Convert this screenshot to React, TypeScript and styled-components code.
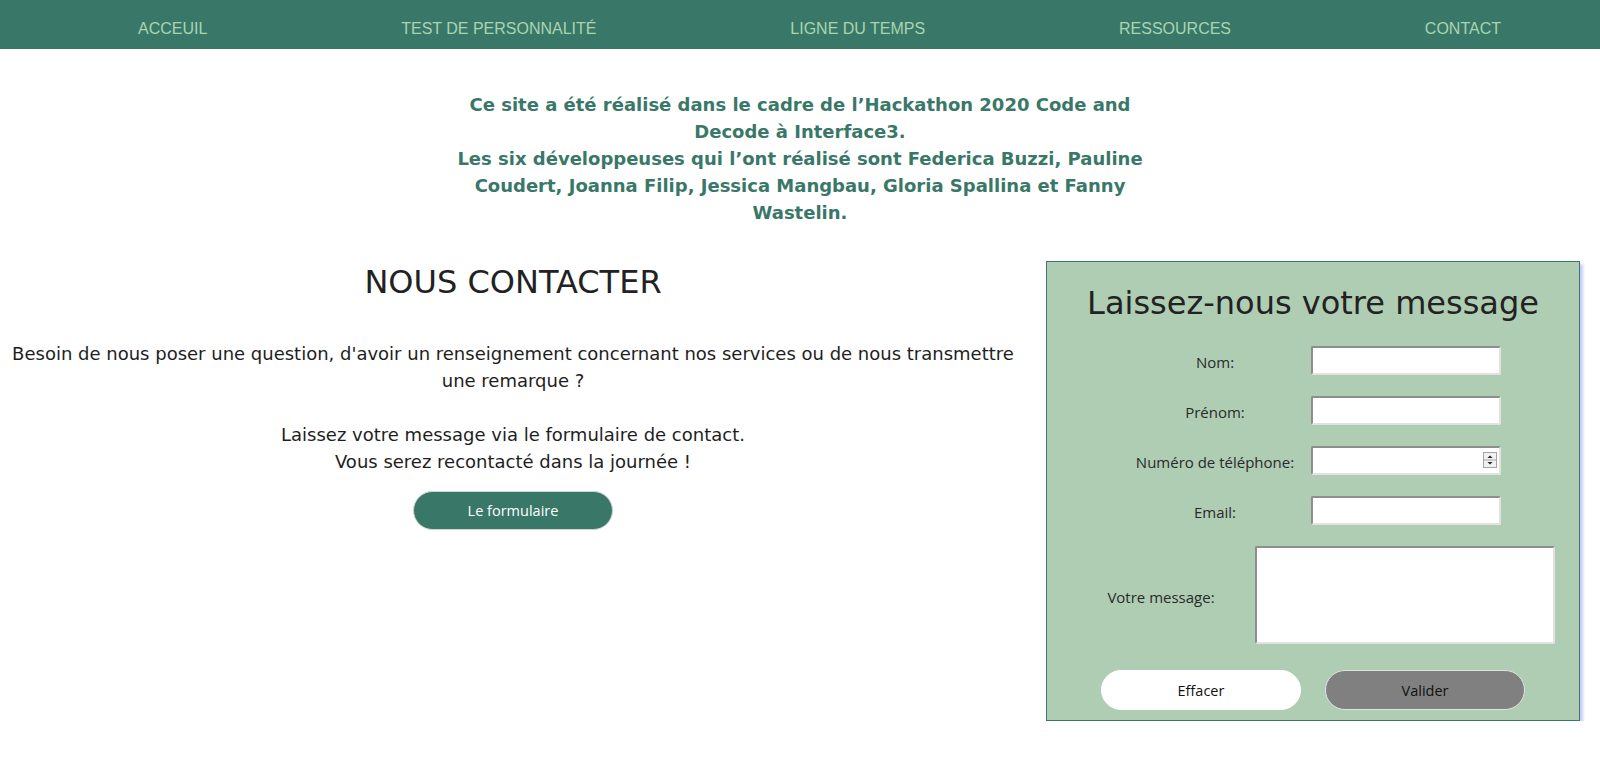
import React from "react";
import styled, { createGlobalStyle } from "styled-components";

const GlobalStyle = createGlobalStyle`
  html, body {
    margin: 0;
    padding: 0;
    background: #ffffff;
  }
  body {
    font-family: "DejaVu Sans", Verdana, sans-serif;
    color: #222222;
  }
  * { box-sizing: border-box; }
`;

const Nav = styled.nav`
  display: flex;
  justify-content: space-between;
  align-items: flex-start;
  height: 49px;
  padding: 20px 99px 0 138px;
  background: #397868;
`;

const NavLink = styled.a`
  font-family: "Liberation Sans", Arial, sans-serif;
  font-size: 16px;
  line-height: 18px;
  color: #a9d4b1;
  text-decoration: none;
  white-space: nowrap;
`;

const Intro = styled.p`
  width: 715px;
  margin: 42px auto 0;
  text-align: center;
  font-weight: bold;
  font-size: 18px;
  line-height: 27px;
  color: #397868;
`;

const Main = styled.main`
  display: flex;
  align-items: flex-start;
  gap: 20px;
  margin-top: 35px;
  padding-right: 20px;
`;

const ContactInfo = styled.section`
  flex: 1;
  display: flex;
  flex-direction: column;
  align-items: center;
  padding: 0 10px;
  text-align: center;
`;

const Heading = styled.h1`
  margin: 0;
  font-size: 32px;
  line-height: 42px;
  font-weight: normal;
  color: #222222;
`;

const Text = styled.p`
  margin: 37px 0 0;
  font-size: 18px;
  line-height: 27px;
  color: #1e1e1e;
`;

const PillButton = styled.button<{ $variant: "primary" | "light" | "grey" }>`
  width: 200px;
  height: ${(p) => (p.$variant === "primary" ? "39px" : "40px")};
  border-radius: 20px;
  font-family: "Open Sans", "Noto Sans", sans-serif;
  font-size: 14.5px;
  cursor: pointer;
  background: ${(p) =>
    p.$variant === "primary" ? "#397868" : p.$variant === "light" ? "#ffffff" : "#808080"};
  color: ${(p) => (p.$variant === "primary" ? "#ffffff" : "#111111")};
  border: 1px solid
    ${(p) => (p.$variant === "primary" ? "#d4d4d4" : p.$variant === "light" ? "#ffffff" : "#e2e2e2")};
`;

const FormButton = styled(PillButton)`
  margin-top: 16px;
`;

const FormPanel = styled.form`
  width: 534px;
  flex: none;
  padding: 21px 0 10px;
  background: #aecdb3;
  border: 1px solid #397868;
  box-shadow: 3px 3px 3px #c6caff;
  display: flex;
  flex-direction: column;
`;

const PanelTitle = styled.h2`
  margin: 0;
  font-size: 32px;
  line-height: 40px;
  font-weight: normal;
  text-align: center;
  color: #222222;
`;

const Fields = styled.div`
  display: grid;
  grid-template-columns: 180px 190px;
  column-gap: 6px;
  row-gap: 21px;
  align-items: center;
  margin: 23px 0 0 78px;
`;

const MessageRow = styled.div`
  display: grid;
  grid-template-columns: 188px 300px;
  align-items: center;
  margin: 21px 0 0 20px;
`;

const Label = styled.label`
  font-family: "Open Sans", "Noto Sans", sans-serif;
  font-size: 15px;
  line-height: 20px;
  padding-top: 3px;
  color: #2a2a2a;
  text-align: center;
`;

const insetBorder = `
  border-style: solid;
  border-width: 2px;
  border-color: #8e8e8e #e2e2e2 #e2e2e2 #8e8e8e;
  border-radius: 2px;
  background: #ffffff;
  outline: none;
`;

const TextInput = styled.input`
  width: 190px;
  height: 29px;
  ${insetBorder}
`;

const InputWrap = styled.div`
  position: relative;
  width: 190px;
  height: 29px;
`;

const Spinner = styled.svg`
  position: absolute;
  right: 4px;
  top: 6px;
`;

const MessageArea = styled.textarea`
  width: 300px;
  height: 98px;
  resize: none;
  ${insetBorder}
`;

const Actions = styled.div`
  display: flex;
  justify-content: center;
  gap: 24px;
  margin-top: 26px;
`;

const navItems = ["ACCEUIL", "TEST DE PERSONNALITÉ", "LIGNE DU TEMPS", "RESSOURCES", "CONTACT"];

export default function App() {
  return (
    <>
      <GlobalStyle />
      <Nav>
        {navItems.map((item) => (
          <NavLink key={item} href="#">
            {item}
          </NavLink>
        ))}
      </Nav>
      <Intro>
        Ce site a été réalisé dans le cadre de l’Hackathon 2020 Code and Decode à Interface3.
        <br />
        Les six développeuses qui l’ont réalisé sont Federica Buzzi, Pauline Coudert, Joanna Filip,
        Jessica Mangbau, Gloria Spallina et Fanny Wastelin.
      </Intro>
      <Main>
        <ContactInfo>
          <Heading>NOUS CONTACTER</Heading>
          <Text>
            Besoin de nous poser une question, d'avoir un renseignement concernant nos services ou de
            nous transmettre une remarque ?
            <br />
            <br />
            Laissez votre message via le formulaire de contact.
            <br />
            Vous serez recontacté dans la journée !
          </Text>
          <FormButton type="button" $variant="primary">
            Le formulaire
          </FormButton>
        </ContactInfo>
        <FormPanel onSubmit={(e) => e.preventDefault()}>
          <PanelTitle>Laissez-nous votre message</PanelTitle>
          <Fields>
            <Label htmlFor="nom">Nom:</Label>
            <TextInput id="nom" type="text" />
            <Label htmlFor="prenom">Prénom:</Label>
            <TextInput id="prenom" type="text" />
            <Label htmlFor="tel">Numéro de téléphone:</Label>
            <InputWrap>
              <TextInput id="tel" type="text" />
              <Spinner width="14" height="16" viewBox="0 0 14 16">
                <rect x="0.5" y="0.5" width="13" height="15" fill="#f1f1f1" stroke="#a3a3a3" />
                <line x1="1" y1="8" x2="13" y2="8" stroke="#a3a3a3" />
                <path d="M7 3.5 L9.5 6 L4.5 6 Z" fill="#222" />
                <path d="M4.5 10 L9.5 10 L7 12.5 Z" fill="#222" />
              </Spinner>
            </InputWrap>
            <Label htmlFor="email">Email:</Label>
            <TextInput id="email" type="text" />
          </Fields>
          <MessageRow>
            <Label htmlFor="message">Votre message:</Label>
            <MessageArea id="message" />
          </MessageRow>
          <Actions>
            <PillButton type="reset" $variant="light">
              Effacer
            </PillButton>
            <PillButton type="submit" $variant="grey">
              Valider
            </PillButton>
          </Actions>
        </FormPanel>
      </Main>
    </>
  );
}
